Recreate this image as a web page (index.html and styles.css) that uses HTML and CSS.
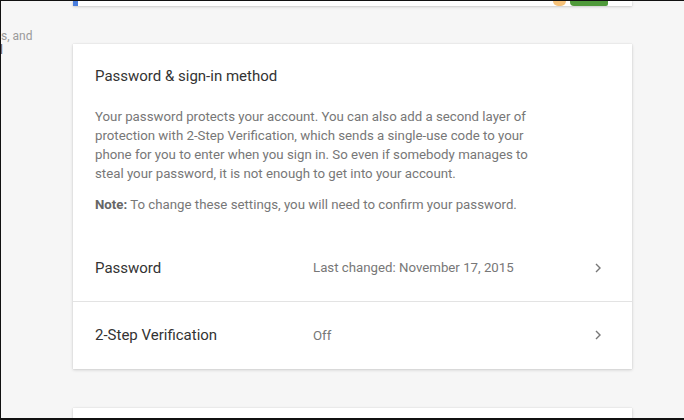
FILE: index.html
```html
<!DOCTYPE html>
<html>
<head>
<meta charset="utf-8">
<link rel="stylesheet" href="styles.css">
</head>
<body>
<div class="screen">
  <aside class="sidebar">
    <div class="side-line">s, and</div>
    <div class="side-line dark">l</div>
  </aside>
  <main class="column">
    <div class="card top-card">
      <div class="blue-tab"></div>
      <div class="spacer"></div>
      <div class="orange-blob"></div>
      <div class="green-block"></div>
    </div>
    <section class="card main-card">
      <div class="intro">
        <h2 class="title">Password &amp; sign-in method</h2>
        <p class="desc">Your password protects your account. You can also add a second layer of protection with 2-Step Verification, which sends a single-use code to your phone for you to enter when you sign in. So even if somebody manages to steal your password, it is not enough to get into your account.</p>
        <p class="desc note"><b>Note:</b> To change these settings, you will need to confirm your password.</p>
      </div>
      <div class="row">
        <div class="label">Password</div>
        <div class="value">Last changed: November 17, 2015</div>
        <svg class="chev" width="8" height="12" viewBox="0 0 8 12"><path d="M2 2 L6 6 L2 10" fill="none" stroke="#777" stroke-width="1.4"/></svg>
      </div>
      <div class="row sep">
        <div class="label">2-Step Verification</div>
        <div class="value">Off</div>
        <svg class="chev" width="8" height="12" viewBox="0 0 8 12"><path d="M2 2 L6 6 L2 10" fill="none" stroke="#777" stroke-width="1.4"/></svg>
      </div>
    </section>
    <div class="card bottom-card"></div>
  </main>
</div>
</body>
</html>
```
FILE: styles.css
```css
* { box-sizing: border-box; }
html, body { margin: 0; padding: 0; }
body {
  background: #f5f5f5;
  font-family: Roboto, "Liberation Sans", sans-serif;
}
.screen {
  width: 684px;
  height: 420px;
  border-top: 1px solid #111;
  border-left: 1px solid #111;
  border-bottom: 2px solid #111;
  background: #f6f6f6;
  display: flex;
  overflow: hidden;
}
.sidebar {
  width: 72px;
  flex: none;
  padding-top: 28px;
  font-size: 12px;
  line-height: 14px;
  color: #9a9a9a;
}
.side-line { white-space: nowrap; }
.side-line.dark { color: #555; font-size: 12px; margin-left: -1px; }
.column {
  width: 559px;
  flex: none;
  display: flex;
  flex-direction: column;
}
.card {
  background: #fff;
  box-shadow: 0 1px 3px rgba(0,0,0,0.16), 0 0 1px rgba(0,0,0,0.12);
  flex: none;
}
.top-card {
  height: 5px;
  display: flex;
  align-items: stretch;
  margin-bottom: 38px;
}
.blue-tab { width: 5px; background: #4a7ede; }
.spacer { flex: 1; }
.orange-blob {
  width: 13px;
  background: #f6c27a;
  border-radius: 0 0 6px 6px;
  margin-right: 4px;
}
.green-block {
  width: 38px;
  background: #4f9a3a;
  margin-right: 24px;
  border-radius: 0 0 2px 4px;
}
.main-card {
  height: 325px;
  margin-bottom: 39px;
}
.intro { padding: 22px 22px 0 22px; }
.title {
  margin: 0;
  font-size: 15px;
  font-weight: 400;
  line-height: 20px;
  color: #333;
}
.desc {
  margin: 21px 0 0 0;
  font-size: 13.25px;
  line-height: 19px;
  color: #777;
  width: 450px;
}
.desc.note { margin-top: 12px; }
.desc b { font-weight: 700; color: #666; }
.row {
  height: 67px;
  display: flex;
  align-items: center;
  padding: 0 30px 0 22px;
}
.intro + .row { margin-top: 20px; }
.row.sep { border-top: 1px solid #e3e3e3; }
.label {
  width: 218px;
  font-size: 15px;
  color: #333;
}
.value {
  flex: 1;
  font-size: 13.25px;
  color: #777;
}
.chev { flex: none; }
.bottom-card { height: 20px; }
```
